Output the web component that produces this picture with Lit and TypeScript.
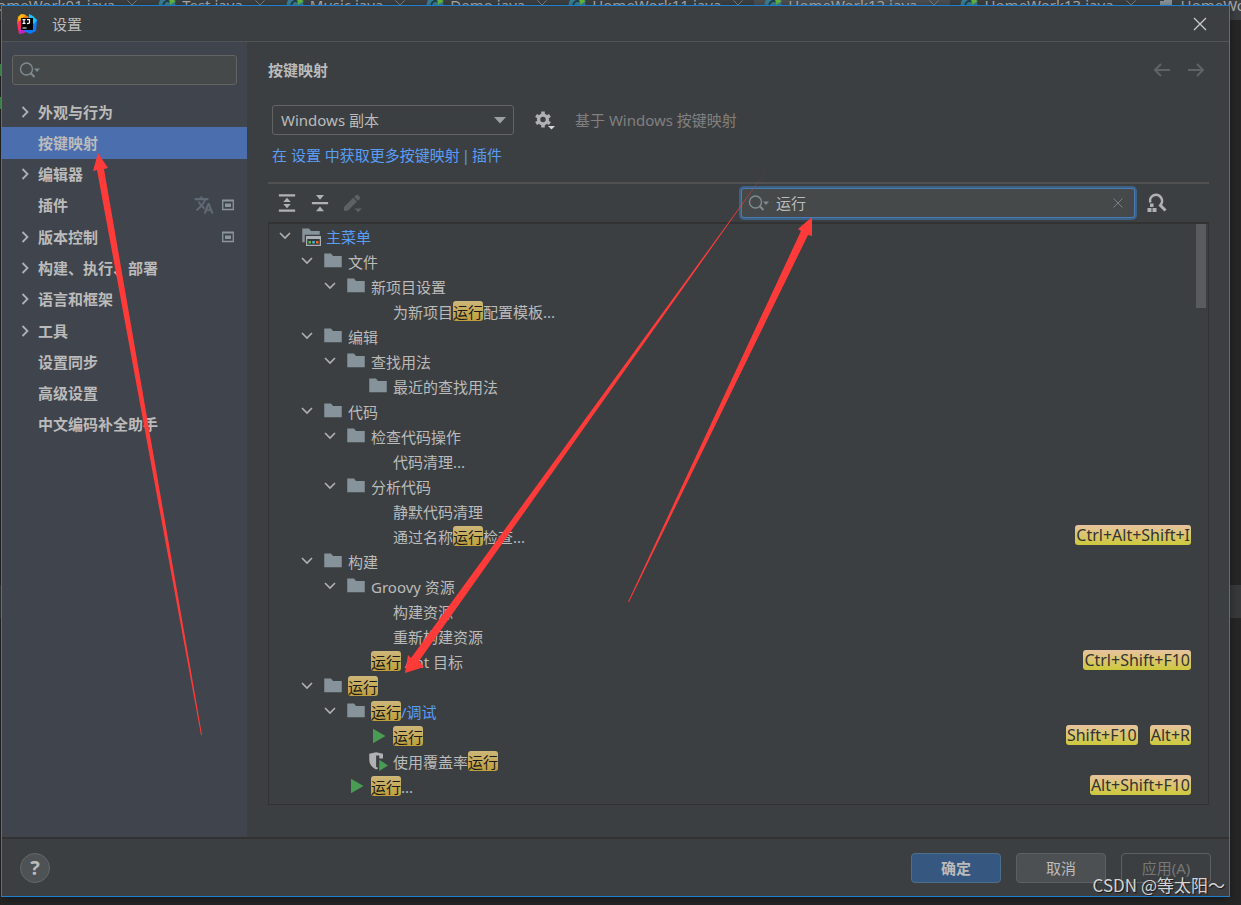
import { LitElement, html, svg, css, nothing } from "lit";
import { customElement, property } from "lit/decorators.js";
import { classMap } from "lit/directives/class-map.js";

type IconName =
  | "folder" | "menuFolder" | "run" | "coverage" | "gear" | "expand" | "collapse" | "edit"
  | "searchMenu" | "findShortcut" | "close" | "clear" | "back" | "forward" | "down" | "right"
  | "translate" | "project" | "logo" | "javaClass" | "file" | "caret";

const FOLDER = "M1 13h14V4H7.98L6.7 2.31C6.57 2.14 6.24 2 6.03 2H1z";

const ICONS: Record<IconName, { box: string; w: number; h: number; body: unknown }> = {
  folder: { box: "0 0 16 16", w: 20, h: 20, body: svg`<path fill="#87939a" d=${FOLDER} />` },
  menuFolder: {
    box: "0 0 16 16", w: 20, h: 20,
    body: svg`<path fill="#87939a" d="M1 13h2V7h12V4H7.98L6.7 2.31C6.57 2.14 6.24 2 6.03 2H1z" />
      <path fill="#a9b0b5" d="M4 8h12v8H4z" /><path fill="#35383a" d="M5 10.4h10V15H5z" />
      <path fill="#62b543" d="M6 12h2v2H6z" /><path fill="#40b6e0" d="M9 12h2v2H9z" /><path fill="#f26522" d="M12 12h2v2h-2z" />`,
  },
  run: { box: "0 0 16 16", w: 20, h: 20, body: svg`<path fill="#499c54" d="M4 2.2 14 8 4 13.8z" />` },
  coverage: {
    box: "0 0 16 16", w: 20, h: 20,
    body: svg`<path fill="#afb1b3" d="M1 2.2 6.5 1 12 2.2V6H9V3.6H6.5v9.2l1.5.6v.6l-1.5.8C3 13 1 10.500 1 7z" />
      <path fill="#499c54" d="M9 7 16 11.500 9 16z" />`,
  },
  gear: {
    box: "0 0 20 20", w: 20, h: 20,
    body: svg`<g fill="#afb1b3"><path d="M6.200 0.500h3.600v16H6.200z" /><path d="M6.200 0.500h3.600v16H6.200z" transform="rotate(60 8 8.500)" /><path d="M6.200 0.500h3.600v16H6.200z" transform="rotate(120 8 8.500)" /></g>
      <circle cx="8" cy="8.500" r="4.400" fill="none" stroke="#afb1b3" stroke-width="3.400" /><circle cx="8" cy="8.500" r="2.700" fill="#3c3f41" />
      <path fill="#d5d6d7" d="M13 15h7l-3.500 3.500z" />`,
  },
  expand: {
    box: "0 0 16 16", w: 20, h: 20,
    body: svg`<path fill="#afb1b3" d="M1.500 1h13v1.800h-13zM1.500 13.200h13V15h-13zM8 3.800 11 7.200H5zM8 12.200 5 8.800h6z" />`,
  },
  collapse: {
    box: "0 0 16 16", w: 20, h: 20,
    body: svg`<path fill="#afb1b3" d="M1.500 7.100h13v1.800h-13zM4.800 1.500h6.400L8 5.300zM4.800 14.500h6.400L8 10.700z" />`,
  },
  edit: {
    box: "0 0 20 20", w: 20, h: 20,
    body: svg`<path fill="#5e6163" d="M1 14 10.200 4.800l3.800 3.800L4.800 17.800H1zM11.200 3.900l2-2q.9-.8 1.700 0l2.100 2.100q.8.9 0 1.700l-2 2zM11.500 15.500h7.500L15.200 19.300z" />`,
  },
  searchMenu: {
    box: "0 0 22 20", w: 22, h: 20,
    body: svg`<circle cx="7.500" cy="9" r="6" fill="none" stroke="#7f8b91" stroke-width="1.400" /><path stroke="#7f8b91" stroke-width="2" d="m11.500 13 4 4" /><path fill="#7f8b91" d="M15 8.500h6l-3 3.500z" />`,
  },
  findShortcut: {
    box: "0 0 20 20", w: 20, h: 20,
    body: svg`<path fill="none" stroke="#afb1b3" stroke-width="2.600" d="M3.300 9.500a6 6 0 1 1 10 2.600" /><path fill="none" stroke="#afb1b3" stroke-width="3" d="m12.500 11.500 6 6" /><path fill="#afb1b3" d="M3 10.500h3.500V14H3zM.5 15h4v4h-4zM5.500 15h4v4h-4z" />`,
  },
  close: { box: "0 0 14 14", w: 14, h: 14, body: svg`<path stroke="#c8c9ca" stroke-width="1.300" d="m1 1 12 12M13 1 1 13" />` },
  clear: { box: "0 0 12 12", w: 12, h: 12, body: svg`<path stroke="#7b8082" d="m1.500 1.500 9 9m0-9-9 9" />` },
  back: { box: "0 0 18 14", w: 18, h: 14, body: svg`<path fill="none" stroke="#606365" stroke-width="2" d="M17 7H2m6-6L2 7l6 6" />` },
  forward: { box: "0 0 18 14", w: 18, h: 14, body: svg`<path fill="none" stroke="#606365" stroke-width="2" d="M1 7h15m-6-6 6 6-6 6" />` },
  down: { box: "0 0 12 12", w: 12, h: 12, body: svg`<path fill="none" stroke="#afb1b3" stroke-width="1.600" d="m1 2 5 5 5-5" />` },
  right: { box: "0 0 12 12", w: 12, h: 12, body: svg`<path fill="none" stroke="#afb1b3" stroke-width="1.800" d="m3.500 1 5 5-5 5" />` },
  translate: {
    box: "0 0 24 24", w: 20, h: 20,
    body: svg`<path fill="#626b76" stroke="#626b76" stroke-width=".6" d="m12.870 15.070-2.540-2.510.030-.030A17.520 17.520 0 0 0 14.070 6H17V4h-7V2H8v2H1v2h11.170C11.500 7.920 10.440 9.750 9 11.350 8.070 10.320 7.300 9.190 6.690 8h-2c.730 1.630 1.730 3.170 2.980 4.560l-5.090 5.020L4 19l5-5 3.110 3.110zM18.500 10h-2L12 22h2l1.120-3h4.750L21 22h2zm-2.620 7 1.620-4.330L19.120 17z" />`,
  },
  project: { box: "0 0 12 12", w: 12, h: 12, body: svg`<path fill="none" stroke="#8a959e" stroke-width="1.300" d="M.7 1.200h10.600v9.300H.7z" /><path fill="#8a959e" d="M1 1h10v1.600H1zM3 4.500h6v3.500H3z" />` },
  logo: {
    box: "0 0 20 20", w: 20, h: 20,
    body: svg`<path fill="#f97a12" d="M1 3 6 0l6 3-6 9-6-3z" /><path fill="#fdb60d" d="M1 3 4 0l5 1-7 7z" /><path fill="#fe315d" d="m0 9 7-6 6 14-11 3z" /><path fill="#c721c5" d="m2 20 1-6 6 3-2 2z" /><path fill="#087cfa" d="m12 0 3 2 5 4-1 11-6 3-6-3 4-6z" /><path fill="#18c5fb" d="m12 0 4 2 4 4-3 4-5-5z" /><path fill="#000" d="M4 4h12v12H4z" /><path fill="none" stroke="#fff" stroke-width="1.200" d="M5.500 5.600h3M7 5.600v4M5.500 9.400h3M10 5.600h2.500v3q0 1-2.500 1M5.500 14h4" />`,
  },
  javaClass: { box: "0 0 18 18", w: 18, h: 18, body: svg`<circle cx="9" cy="9" r="8.500" fill="#3a7f96" /><path fill="none" stroke="#1f3d48" stroke-width="1.800" d="M12.500 6.500a4 4 0 1 0 0 5" /><path fill="#62b543" d="m11 2 7 3-6 4z" />` },
  file: { box: "0 0 18 18", w: 18, h: 18, body: svg`<path fill="#87939a" d="M7 1h8v11H3V5h4z" />` },
  caret: { box: "0 0 12 8", w: 12, h: 8, body: svg`<path fill="#9da0a2" d="M0 1h12L6 7.500z" />` },
};

const icon = (name: IconName) => {
  const i = ICONS[name];
  return html`<svg class="icon" aria-hidden="true" width=${i.w} height=${i.h} viewBox=${i.box}>${i.body}</svg>`;
};

interface Section { label: string; open?: boolean; selected?: boolean; translate?: boolean; project?: boolean }

const SECTIONS: Section[] = [
  { label: "外观与行为", open: true },
  { label: "按键映射", selected: true },
  { label: "编辑器", open: true },
  { label: "插件", translate: true, project: true },
  { label: "版本控制", open: true, project: true },
  { label: "构建、执行、部署", open: true },
  { label: "语言和框架", open: true },
  { label: "工具", open: true },
  { label: "设置同步" },
  { label: "高级设置" },
  { label: "中文编码补全助手" },
];

interface Action { level: number; label: string; icon?: IconName; group?: boolean; changed?: boolean; keys?: string[] }

const ACTIONS: Action[] = [
  { level: 0, label: "主菜单", icon: "menuFolder", group: true, changed: true },
  { level: 1, label: "文件", icon: "folder", group: true },
  { level: 2, label: "新项目设置", icon: "folder", group: true },
  { level: 3, label: "为新项目运行配置模板..." },
  { level: 1, label: "编辑", icon: "folder", group: true },
  { level: 2, label: "查找用法", icon: "folder", group: true },
  { level: 3, label: "最近的查找用法", icon: "folder" },
  { level: 1, label: "代码", icon: "folder", group: true },
  { level: 2, label: "检查代码操作", icon: "folder", group: true },
  { level: 3, label: "代码清理..." },
  { level: 2, label: "分析代码", icon: "folder", group: true },
  { level: 3, label: "静默代码清理" },
  { level: 3, label: "通过名称运行检查...", keys: ["Ctrl+Alt+Shift+I"] },
  { level: 1, label: "构建", icon: "folder", group: true },
  { level: 2, label: "Groovy 资源", icon: "folder", group: true },
  { level: 3, label: "构建资源" },
  { level: 3, label: "重新构建资源" },
  { level: 2, label: "运行 Ant 目标", keys: ["Ctrl+Shift+F10"] },
  { level: 1, label: "运行", icon: "folder", group: true },
  { level: 2, label: "运行/调试", icon: "folder", group: true, changed: true },
  { level: 3, label: "运行", icon: "run", keys: ["Shift+F10", "Alt+R"] },
  { level: 3, label: "使用覆盖率运行", icon: "coverage" },
  { level: 2, label: "运行...", icon: "run", keys: ["Alt+Shift+F10"] },
];

const base = css`
  *, *::before, *::after { box-sizing: border-box; }
  .icon { display: block; flex: none; }
  button, input, select { font: inherit; color: inherit; margin: 0; }
  button { padding: 0; border: 0; background: none; }
  ul { list-style: none; margin: 0; padding: 0; }
`;

@customElement("editor-backdrop")
export class EditorBackdrop extends LitElement {
  static styles = [base, css`
    :host { display: block; background: #262626; overflow: hidden; }
    .tabs { display: flex; height: 30px; margin: -10px 0 0 -48px; background: #3c3f41; color: #a9abad; }
    .tab { display: flex; flex: none; align-items: center; gap: 6px; padding: 0 10px; }
    .tab.active { background: #4a4e51; }
    .tab .icon:last-child { margin-left: 5px; }
    .gutter { width: 1px; height: 12px; margin-top: 44px; background: #499c54; }
    .gutter + .gutter { margin-top: 21px; }
    .band { height: 33px; margin-top: 476px; background: #37393b; }
  `];

  render() {
    const names = ["HomeWork01", "Test", "Music", "Demo", "HomeWork11", "HomeWork12", "HomeWork13", "HomeWork14"];
    return html`
      <div class="tabs">
        ${names.map((n) => html`<div class=${classMap({ tab: true, active: n === "HomeWork12" })}>
          ${icon(n === "HomeWork14" ? "file" : "javaClass")}<span>${n}.java</span>${icon("clear")}
        </div>`)}
      </div>
      <div class="gutter"></div>
      <div class="gutter"></div>
      <div class="band"></div>`;
  }
}

@customElement("settings-sidebar")
export class SettingsSidebar extends LitElement {
  static styles = [base, css`
    :host { display: block; background: #40444c; }
    .search { display: flex; align-items: center; height: 30px; margin: 13px 10px 11px; padding: 0 6px; border: 1px solid #646464; border-radius: 3px; background: #45494a; }
    .search input { flex: 1; min-width: 0; border: 0; outline: 0; background: none; }
    .list { display: grid; grid-auto-rows: 1fr; height: 344px; }
    .item { display: flex; align-items: center; width: 100%; height: 100%; padding: 0 13px 0 17px; color: #bbbbbb; font-weight: bold; text-align: left; }
    .item.selected { background: #4b6eaf; }
    .twisty { width: 19px; }
    .label { flex: 1; }
    .marks { display: flex; align-items: center; gap: 8px; }
  `];

  render() {
    return html`
      <label class="search">${icon("searchMenu")}<input type="text" aria-label="搜索设置" /></label>
      <ul class="list">
        ${SECTIONS.map((s) => html`<li>
          <button class=${classMap({ item: true, selected: !!s.selected })}>
            <span class="twisty">${s.open ? icon("right") : nothing}</span>
            <span class="label">${s.label}</span>
            <span class="marks">${s.translate ? icon("translate") : nothing}${s.project ? icon("project") : nothing}</span>
          </button>
        </li>`)}
      </ul>`;
  }
}

@customElement("keymap-tree")
export class KeymapTree extends LitElement {
  @property() query = "";

  static styles = [base, css`
    :host { display: block; position: relative; overflow: hidden; border: 1px solid #323232; border-top-width: 2px; }
    .row { display: flex; align-items: center; height: 25px; padding: 0 17px 0 10px; }
    .indent { flex: none; }
    .toggle { width: 12px; height: 16px; margin-right: 10px; flex: none; }
    .glyph { width: 20px; height: 22px; margin-right: 5px; flex: none; }
    .label { flex: 1; align-self: flex-start; padding-top: 1px; line-height: 25px; color: #bbbbbb; white-space: pre; }
    .label.changed { color: #589df6; }
    mark { display: inline-block; height: 20px; line-height: 23px; vertical-align: top; margin-top: 1px; border-radius: 3px; color: #1a1a1a; background: linear-gradient(#cdb77a, #bf9f3a); }
    .keys { display: flex; gap: 12px; align-self: flex-start; padding-top: 1px; }
    kbd { padding: 0 1px; border-radius: 3px; font: 16px/21px "Noto Sans", sans-serif; height: 20px; color: #333333; background: linear-gradient(#e8c3a0, #cdc93c); }
    .thumb { position: absolute; top: 0; right: 2px; width: 10px; height: 84px; background: #595b5d; }
  `];

  private mark(text: string) {
    if (!this.query) return text;
    return text.split(this.query).map((part, i) => (i ? html`<mark>${this.query}</mark>${part}` : part));
  }

  render() {
    return html`
      <ul role="tree">
        ${ACTIONS.map((a) => html`<li class="row" role="treeitem" aria-level=${a.level + 1}>
          <span class="indent" style="width:${Math.floor((a.level * 45) / 2)}px"></span>
          ${a.group ? html`<button class="toggle" aria-label="折叠">${icon("down")}</button>` : html`<span class="toggle"></span>`}
          <span class="glyph">${a.icon ? icon(a.icon) : nothing}</span>
          <span class=${classMap({ label: true, changed: !!a.changed })}>${this.mark(a.label)}</span>
          ${a.keys ? html`<span class="keys">${a.keys.map((k) => html`<kbd>${k}</kbd>`)}</span>` : nothing}
        </li>`)}
      </ul>
      <div class="thumb"></div>`;
  }
}

@customElement("app-root")
export class AppRoot extends LitElement {
  static styles = [base, css`
    :host { display: grid; position: relative; height: 100vh; overflow: hidden; font: 15px/22px "Noto Sans", "Noto Sans CJK SC", sans-serif; color: #bbbbbb; }
    editor-backdrop, .dialog { grid-area: 1 / 1; min-width: 0; min-height: 0; }
    .dialog { display: flex; flex-direction: column; margin: 5px 11px 8px 1px; border: 1px solid #1f7fd1; background: #3c3f41; z-index: 1; box-shadow: 0 2px 8px #00000066; }
    .titlebar { display: flex; align-items: center; gap: 15px; height: 36px; padding: 0 22px 0 15px; border-bottom: 1px solid #515456; flex: none; }
    .titlebar h1 { flex: 1; margin: 0; font-size: 15px; font-weight: normal; }
    .body { flex: 1; display: grid; grid-template-columns: 245px 1fr; min-height: 0; }
    main { display: flex; flex-direction: column; min-width: 0; min-height: 0; padding: 0 20px 32px 21px; }
    .head { display: flex; align-items: center; height: 56px; padding-right: 4px; }
    .head h2 { flex: 1; margin: 0; font-size: 15px; }
    .head button + button { margin-left: 16px; }
    .scheme { display: flex; align-items: center; margin: 7px 4px 9px; }
    .combo { position: relative; width: 242px; }
    .combo select { display: block; width: 100%; height: 30px; padding: 0 30px 0 8px; border: 1px solid #646464; border-radius: 3px; appearance: none; background: #3c3f41; }
    .combo .icon { position: absolute; right: 8px; top: 11px; pointer-events: none; }
    .gear { margin: 2px 20px 0 21px; }
    .hint { color: #808080; }
    .links { display: flex; gap: 2px; margin: 0 4px 16px; color: #589df6; }
    .links a { color: inherit; text-decoration: none; }
    .toolbar { display: flex; align-items: center; gap: 13px; height: 40px; padding: 0 42px 0 9px; border-top: 2px solid #515151; }
    .find { display: flex; align-items: center; width: 392px; height: 28px; margin-left: auto; padding: 0 10px 0 6px; border-radius: 2px; background: #45494a; box-shadow: 0 0 0 1px #4a7bb0, 0 0 0 3px #3d6185; }
    .find input { flex: 1; min-width: 0; margin-left: 6px; padding: 0; border: 0; outline: 0; background: none; }
    keymap-tree { flex: 1; min-height: 0; }
    footer { display: flex; align-items: center; gap: 15px; height: 59px; padding: 0 18px; border-top: 2px solid #323232; flex: none; }
    .help { width: 30px; height: 30px; margin-right: auto; border: 1px solid #65686a; border-radius: 50%; background: #4e5254; font-size: 20px; font-weight: bold; }
    .btn { width: 90px; height: 30px; border: 1px solid #5e6060; border-radius: 4px; background: #4c5052; }
    .btn.primary { border-color: #4c708c; background: #365880; font-weight: bold; }
    .btn:disabled { background: none; color: #777777; }
    .arrows { position: absolute; inset: 0; z-index: 2; pointer-events: none; }
    .watermark { position: absolute; right: 16px; bottom: 9px; z-index: 3; font: 17px/22px "Noto Sans CJK SC", sans-serif; color: #d4d4d4; text-shadow: 1px 1px 1px #000000aa; }
  `];

  render() {
    return html`
      <editor-backdrop></editor-backdrop>
      <section class="dialog" role="dialog" aria-label="设置">
        <header class="titlebar">
          ${icon("logo")}
          <h1>设置</h1>
          <button aria-label="关闭">${icon("close")}</button>
        </header>
        <div class="body">
          <settings-sidebar></settings-sidebar>
          <main>
            <div class="head">
              <h2>按键映射</h2>
              <button aria-label="后退">${icon("back")}</button>
              <button aria-label="前进">${icon("forward")}</button>
            </div>
            <div class="scheme">
              <div class="combo">
                <select aria-label="按键映射方案"><option>Windows 副本</option></select>
                ${icon("caret")}
              </div>
              <button class="gear" aria-label="方案操作">${icon("gear")}</button>
              <span class="hint">基于 Windows 按键映射</span>
            </div>
            <div class="links"><a href="#more">在 设置 中获取更多按键映射</a><span>|</span><a href="#plugins">插件</a></div>
            <div class="toolbar">
              <button aria-label="全部展开">${icon("expand")}</button>
              <button aria-label="全部折叠">${icon("collapse")}</button>
              <button aria-label="编辑快捷键" disabled>${icon("edit")}</button>
              <label class="find">
                ${icon("searchMenu")}
                <input type="text" aria-label="搜索操作" value="运行" />
                <button aria-label="清除">${icon("clear")}</button>
              </label>
              <button aria-label="按快捷键查找">${icon("findShortcut")}</button>
            </div>
            <keymap-tree query="运行"></keymap-tree>
          </main>
        </div>
        <footer>
          <button class="help" aria-label="帮助">?</button>
          <button class="btn primary">确定</button>
          <button class="btn">取消</button>
          <button class="btn" disabled>应用(A)</button>
        </footer>
      </section>
      <svg class="arrows" width="1241" height="905" viewBox="0 0 1241 905" aria-hidden="true">
        <g fill="#ff3b3a">
          <path d="M98 153 93 171 97 170 201 735 202 735 104 169 108 168z" />
          <path d="M405 673 408 655 411 658 766 171 419 661 424 667z" />
          <path d="M812 217 798 229 801 231 628 602 629 602 808 235 812 236z" />
        </g>
      </svg>
      <div class="watermark">CSDN @等太阳～</div>`;
  }
}
